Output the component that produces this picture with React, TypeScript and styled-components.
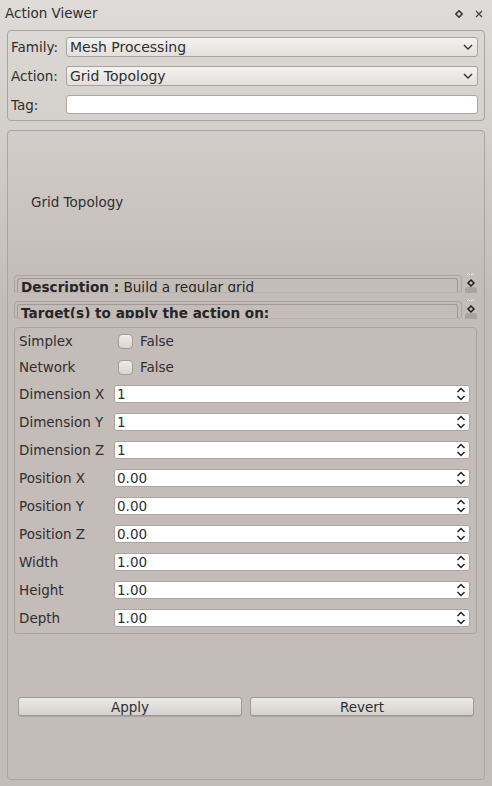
import styled, { createGlobalStyle } from 'styled-components';

const GlobalStyle = createGlobalStyle`
	html, body {
		margin: 0;
		padding: 0;
		background: #c4bcb9;
	}
	* {
		box-sizing: border-box;
	}
`;

const Window = styled.div`
	width: 492px;
	height: 786px;
	display: flex;
	flex-direction: column;
	background: linear-gradient(to bottom, #dedbd8 0px, #d3cfcb 130px, #c4bcb9 300px, #c4bcb9 100%);
	font-family: 'DejaVu Sans', 'Liberation Sans', sans-serif;
	font-size: 13.5px;
	color: #2f2f2f;
	overflow: hidden;
`;

const TitleBar = styled.div`
	height: 26px;
	display: flex;
	align-items: center;
	justify-content: space-between;
	padding: 0 9px 0 5px;
	flex-shrink: 0;
`;

const TitleButtons = styled.div`
	display: flex;
	align-items: center;
	gap: 12px;
	padding-top: 1px;
`;

const GroupBox = styled.div`
	margin: 4px 7px 0 7px;
	border: 1px solid #aaa4a1;
	border-radius: 4px;
	padding: 6px 6px 6px 3px;
	display: grid;
	grid-template-columns: 55px 1fr;
	grid-template-rows: 20px 20px 19px;
	row-gap: 9px;
	align-items: center;
`;

const Label = styled.div<{ $indent?: number }>`
	padding-left: ${(p) => p.$indent ?? 0}px;
	white-space: nowrap;
`;

const Combo = styled.div`
	height: 20px;
	border: 1px solid #a8a3a0;
	border-radius: 3px;
	background: linear-gradient(to bottom, #f4f2f1, #e2dfdc);
	display: flex;
	align-items: center;
	justify-content: space-between;
	padding: 0 4px 0 3px;
	font-size: 14px;
`;

const LineEdit = styled.div`
	height: 19px;
	border: 1px solid #aba6a3;
	border-radius: 3px;
	background: #ffffff;
`;

const Panel = styled.div`
	flex: 1;
	margin: 9px 7px 6px 7px;
	border: 1px solid #aba5a2;
	border-radius: 4px;
	display: flex;
	flex-direction: column;
	background: linear-gradient(to bottom, #d2cdca 0px, #c4bcb9 150px, #c4bcb9 100%);
`;

const Hero = styled.div`
	height: 141px;
	display: flex;
	align-items: center;
	padding-left: 23px;
	flex-shrink: 0;
`;

const InfoRow = styled.div<{ $gap: number }>`
	height: 21px;
	margin: ${(p) => p.$gap}px 6px 0 6px;
	display: flex;
	align-items: flex-end;
	gap: 2px;
`;

const InfoFrame = styled.div`
	width: 449px;
	height: 18px;
	border: 1px solid #aaa39f;
	border-bottom-color: #b9b1ae;
	border-radius: 4px 4px 3px 3px;
	padding: 2px 3px 0 2px;
`;

const InfoInner = styled.div`
	height: 14px;
	border: 1px solid #9f9895;
	border-bottom: none;
	border-radius: 3px 3px 0 0;
	overflow: hidden;
	font-size: 13.6px;
	line-height: 16px;
	color: #262626;
	padding-left: 3px;
	white-space: nowrap;
	b {
		font-weight: bold;
	}
`;

const ParamGroup = styled.div`
	margin: 8px 7px 0 6px;
	border: 1px solid #aaa4a1;
	border-radius: 4px;
	padding: 0 6px 1px 0;
	display: grid;
	grid-template-columns: 99px 1fr;
`;

const ParamRow = styled.div<{ $h: number }>`
	display: contents;
	& > * {
		height: ${(p) => p.$h}px;
		display: flex;
		align-items: center;
	}
`;

const CheckCell = styled.div`
	gap: 7px;
	padding-left: 4px;
`;

const CheckBox = styled.span`
	width: 15px;
	height: 15px;
	border: 1px solid #a29c98;
	border-radius: 4px;
	background: linear-gradient(to bottom, #eeebe9, #d8d4d1);
`;

const SpinCell = styled.div``;

const SpinBox = styled.div`
	width: 100%;
	height: 18px;
	border: 1px solid #aaa5a2;
	border-radius: 3px;
	background: #ffffff;
	display: flex;
	align-items: center;
	justify-content: space-between;
	padding: 0 3px 0 2px;
`;

const ButtonBar = styled.div`
	margin: 63px 10px 0 10px;
	display: grid;
	grid-template-columns: 1fr 1fr;
	gap: 8px;
`;

const Button = styled.div`
	height: 19px;
	border: 1px solid #a09a97;
	border-radius: 3px;
	background: linear-gradient(to bottom, #ebe9e7, #d5d1ce);
	box-shadow: 0 1px 0 rgba(120, 112, 108, 0.35);
	display: flex;
	align-items: center;
	justify-content: center;
`;

const FloatIcon = () => (
	<svg width="8" height="8" viewBox="0 0 8 8">
		<path d="M4 0.8 L7.2 4 L4 7.2 L0.8 4 Z" fill="none" stroke="#333" strokeWidth="1.6" />
	</svg>
);

const CloseIcon = () => (
	<svg width="8" height="8" viewBox="0 0 8 8">
		<path d="M1 1 L7 7 M7 1 L1 7" stroke="#444" strokeWidth="1.3" />
	</svg>
);

const ChevronDown = () => (
	<svg width="10" height="6" viewBox="0 0 10 6">
		<polyline points="1,1 5,5 9,1" fill="none" stroke="#333" strokeWidth="1.4" />
	</svg>
);

const SpinArrows = () => (
	<svg width="10" height="14" viewBox="0 0 10 14">
		<polyline points="1.5,5 5,1.5 8.5,5" fill="none" stroke="#222" strokeWidth="1.5" />
		<polyline points="1.5,9 5,12.5 8.5,9" fill="none" stroke="#222" strokeWidth="1.5" />
	</svg>
);

const Scroller = () => (
	<svg width="14" height="21" viewBox="0 0 14 21">
		<polyline points="3,3 4.5,1.5 6,3" fill="none" stroke="#f0edeb" strokeWidth="1" />
		<polyline points="7,3 8.5,1.5 10,3" fill="none" stroke="#f0edeb" strokeWidth="1" />
		<path d="M7 8 L10 11 L7 14 L4 11 Z" fill="none" stroke="#1f1f1f" strokeWidth="1.5" />
		<path d="M1 21 L1 18 Q1 15 4 15 L10 15 Q13 15 13 18 L13 21 Z" fill="#a9a29f" />
	</svg>
);

const params: { label: string; value: string; check?: boolean }[] = [
	{ label: 'Simplex', value: 'False', check: true },
	{ label: 'Network', value: 'False', check: true },
	{ label: 'Dimension X', value: '1' },
	{ label: 'Dimension Y', value: '1' },
	{ label: 'Dimension Z', value: '1' },
	{ label: 'Position X', value: '0.00' },
	{ label: 'Position Y', value: '0.00' },
	{ label: 'Position Z', value: '0.00' },
	{ label: 'Width', value: '1.00' },
	{ label: 'Height', value: '1.00' },
	{ label: 'Depth', value: '1.00' },
];

export default function App() {
	return (
		<Window>
			<GlobalStyle />
			<TitleBar>
				<span>Action Viewer</span>
				<TitleButtons>
					<FloatIcon />
					<CloseIcon />
				</TitleButtons>
			</TitleBar>

			<GroupBox>
				<Label>Family:</Label>
				<Combo>
					<span>Mesh Processing</span>
					<ChevronDown />
				</Combo>
				<Label>Action:</Label>
				<Combo>
					<span>Grid Topology</span>
					<ChevronDown />
				</Combo>
				<Label>Tag:</Label>
				<LineEdit />
			</GroupBox>

			<Panel>
				<Hero>Grid Topology</Hero>
				<InfoRow $gap={0}>
					<InfoFrame>
						<InfoInner>
							<b>Description :</b> Build a regular grid
						</InfoInner>
					</InfoFrame>
					<Scroller />
				</InfoRow>
				<InfoRow $gap={5}>
					<InfoFrame>
						<InfoInner>
							<b>Target(s) to apply the action on:</b>
						</InfoInner>
					</InfoFrame>
					<Scroller />
				</InfoRow>

				<ParamGroup>
					{params.map((p) => (
						<ParamRow key={p.label} $h={p.check ? 26 : 28}>
							<Label $indent={4}>{p.label}</Label>
							{p.check ? (
								<CheckCell>
									<CheckBox />
									<span>{p.value}</span>
								</CheckCell>
							) : (
								<SpinCell>
									<SpinBox>
										<span>{p.value}</span>
										<SpinArrows />
									</SpinBox>
								</SpinCell>
							)}
						</ParamRow>
					))}
				</ParamGroup>

				<ButtonBar>
					<Button>Apply</Button>
					<Button>Revert</Button>
				</ButtonBar>
			</Panel>
		</Window>
	);
}
